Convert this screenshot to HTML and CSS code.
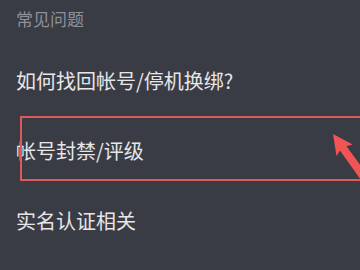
FILE: index.html
```html
<!DOCTYPE html>
<html lang="zh-CN">
<head>
<meta charset="utf-8">
<link rel="stylesheet" href="styles.css">
</head>
<body>
<div class="page">
  <div class="section-title">常见问题</div>
  <ul class="faq">
    <li class="faq-item">如何找回帐号/停机换绑?</li>
    <li class="faq-item">帐号封禁/评级</li>
    <li class="faq-item">实名认证相关</li>
  </ul>
  <div class="highlight"></div>
  <svg class="arrow" width="360" height="270" viewBox="0 0 360 270">
    <polygon points="333,134 352.7,144.4 346.5,146.2 377,188 370,193 340,150.5 336.5,156" fill="#f05454"/>
  </svg>
</div>
</body>
</html>
```

FILE: styles.css
```css
html, body {
  margin: 0;
  padding: 0;
  background: #3a3c45;
}
.page {
  position: relative;
  width: 360px;
  height: 270px;
  overflow: hidden;
  font-family: "Noto Sans CJK SC", "Noto Sans", sans-serif;
}
.section-title {
  height: 36px;
  display: flex;
  align-items: center;
  padding-left: 16px;
  font-size: 17px;
  color: #8e9098;
}
.faq {
  list-style: none;
  margin: 9px 0 0 0;
  padding: 0;
}
.faq-item {
  height: 70px;
  display: flex;
  align-items: center;
  padding-left: 16px;
  font-size: 20px;
  color: #e6e6e8;
}
.highlight {
  position: absolute;
  left: 20px;
  top: 116px;
  width: 360px;
  height: 61px;
  border: 2px solid #de5a5a;
}
.arrow {
  position: absolute;
  left: 0;
  top: 0;
}
```
